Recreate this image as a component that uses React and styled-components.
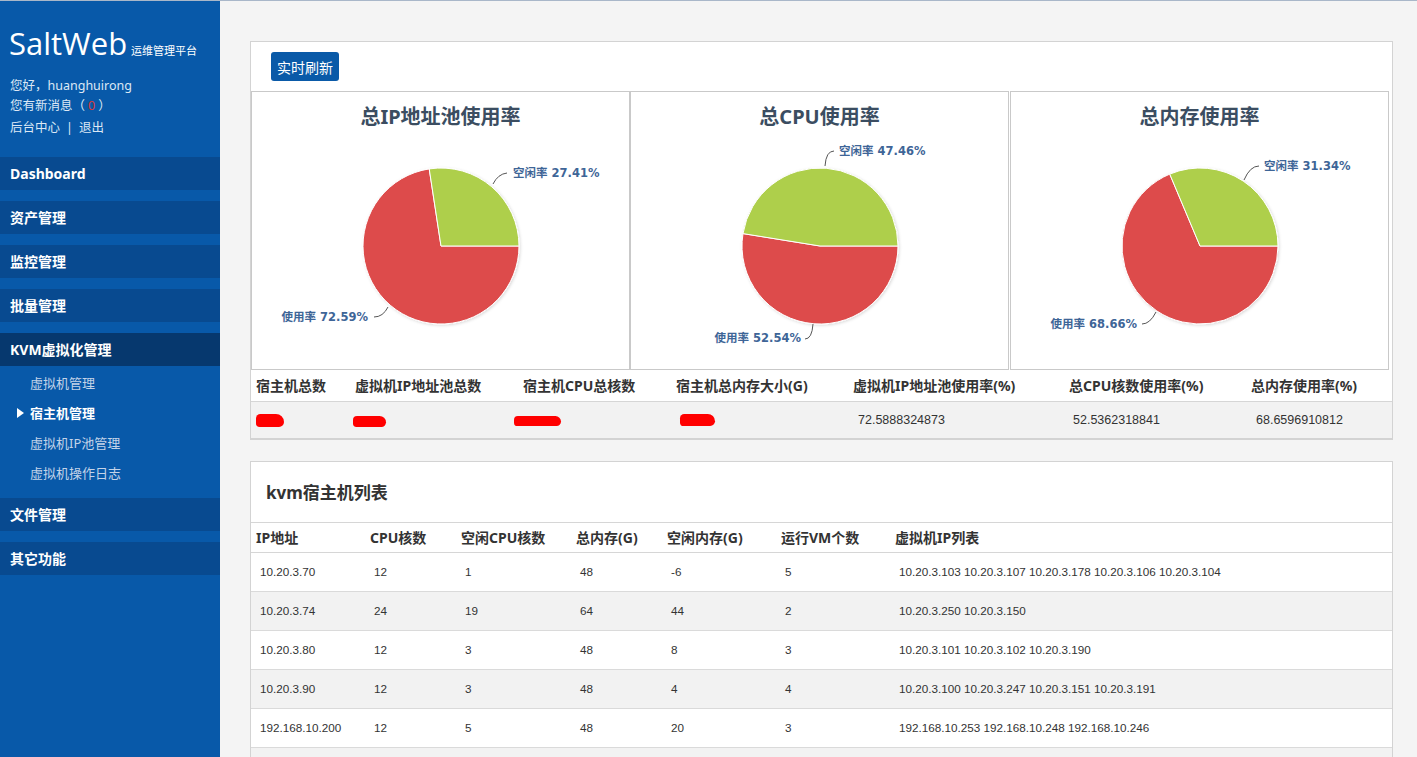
import React from 'react';
import styled, { createGlobalStyle } from 'styled-components';

const GlobalStyle = createGlobalStyle`
  html, body {
    margin: 0;
    padding: 0;
    background: #f4f4f4;
    font-family: "Noto Sans", "Noto Sans CJK SC", sans-serif;
    color: #333;
  }
`;

const Layout = styled.div`
  display: flex;
  min-height: 757px;
  border-top: 1px solid #a9b7c9;
  box-sizing: border-box;
`;

const Sidebar = styled.aside`
  width: 220px;
  flex-shrink: 0;
  background: #0859a9;
  color: #fff;
`;

const Brand = styled.div`
  display: flex;
  align-items: baseline;
  padding: 25px 0 0 9px;
  height: 44px;
`;

const Logo = styled.span`
  font-family: "Open Sans", "Noto Sans", sans-serif;
  font-size: 31px;
  line-height: 34px;
`;

const Slogan = styled.span`
  font-family: "Noto Sans CJK SC", sans-serif;
  font-size: 11px;
  margin-left: 4px;
`;

const UserInfo = styled.div`
  padding: 6px 0 0 10px;
  font-size: 12.5px;
  line-height: 19.5px;
  color: #dce8f5;
`;

const InfoLine = styled.div`
  margin-top: ${p => p.$gap || 0}px;
`;

const Badge = styled.span`
  color: #d9393b;
  margin: 0 3px;
`;

const Divider = styled.span`
  margin: 0 6px;
`;

const Nav = styled.nav`
  margin-top: 19px;
  display: flex;
  flex-direction: column;
  gap: 11px;
`;

const NavBar = styled.div`
  height: 33px;
  display: flex;
  align-items: center;
  padding-left: 10px;
  background: ${p => (p.$active ? '#06386e' : '#084a90')};
  font-weight: 700;
  font-size: 14px;
  color: #fff;
`;

const SubList = styled.div`
  padding: 2px 0 0;
  margin-bottom: -1px;
`;

const SubItem = styled.div`
  position: relative;
  height: 30px;
  display: flex;
  align-items: center;
  padding-left: 30px;
  font-size: 13px;
  font-weight: ${p => (p.$active ? 700 : 400)};
  color: ${p => (p.$active ? '#fff' : '#c3d3e8')};
`;

const Caret = styled.span`
  position: absolute;
  left: 17px;
  top: 10px;
  width: 0;
  height: 0;
  border-left: 7px solid #fff;
  border-top: 5px solid transparent;
  border-bottom: 5px solid transparent;
`;

const Main = styled.main`
  flex: 1;
  padding: 40px 24px 0 30px;
  display: flex;
  flex-direction: column;
  gap: 21px;
  overflow: hidden;
`;

const Card = styled.section`
  background: #fff;
  border: 1px solid #d3d3d3;
  border-bottom-width: ${p => p.$bottom || 1}px;
`;

const Toolbar = styled.div`
  padding: 10px 20px;
`;

const Button = styled.button`
  height: 29px;
  padding: 0 6px;
  border: none;
  border-radius: 3px;
  background: #0a5aa8;
  color: #fff;
  font-family: "Noto Sans CJK SC", sans-serif;
  font-size: 14px;
`;

const ChartRow = styled.div`
  display: flex;
`;

const ChartBox = styled.div`
  width: 379px;
  height: 279px;
  box-sizing: border-box;
  border: 1px solid #c9c9c9;
  margin-right: ${p => p.$gap || 0}px;
  display: flex;
  flex-direction: column;
`;

const ChartTitle = styled.h3`
  margin: 12px 0 0;
  height: 26px;
  line-height: 26px;
  text-align: center;
  font-size: 20px;
  font-weight: 700;
  color: #3b4d61;
`;

const Table = styled.table`
  width: 100%;
  border-collapse: collapse;
  table-layout: fixed;
`;

const Th = styled.th`
  box-sizing: border-box;
  width: ${p => (p.$w ? `${p.$w}px` : 'auto')};
  height: ${p => p.$h || 31}px;
  padding: 0 0 0 5px;
  text-align: left;
  font-size: 14px;
  font-weight: 700;
  color: #333;
  border-top: ${p => (p.$top ? '1px solid #d6d6d6' : 'none')};
  border-bottom: 1px solid #d6d6d6;
  white-space: nowrap;
`;

const Tr = styled.tr`
  background: ${p => (p.$striped ? '#f2f2f2' : '#fff')};
`;

const Td = styled.td`
  height: ${p => p.$h || 38}px;
  padding: 0 0 0 ${p => p.$pad || 9}px;
  font-family: "Liberation Sans", "Noto Sans CJK SC", sans-serif;
  font-size: ${p => p.$size || 11.7}px;
  color: #333;
  border-bottom: ${p => (p.$line ? '1px solid #dadada' : 'none')};
  white-space: nowrap;
`;

const Redact = styled.span`
  display: inline-block;
  vertical-align: middle;
  width: ${p => p.$w}px;
  height: ${p => p.$h || 11}px;
  margin-left: ${p => p.$x || 0}px;
  margin-top: ${p => p.$y || 0}px;
  background: #f00;
  border-radius: 7px ${p => p.$h || 11}px 8px 6px;
`;

const ListTitle = styled.h2`
  margin: 0;
  height: 60px;
  display: flex;
  align-items: center;
  padding-left: 15px;
  font-size: 17px;
  font-weight: 700;
  color: #333;
`;

const CX = 189;
const CY = 116;
const R = 78;

const pt = (deg, r) => {
  const a = (deg * Math.PI) / 180;
  return [CX + r * Math.sin(a), CY - r * Math.cos(a)];
};

const slicePath = (from, to) => {
  const [x1, y1] = pt(from, R);
  const [x2, y2] = pt(to, R);
  const large = to - from > 180 ? 1 : 0;
  return `M${CX} ${CY} L${x1} ${y1} A${R} ${R} 0 ${large} 1 ${x2} ${y2} Z`;
};

const charts = [
  {
    title: '总IP地址池使用率',
    used: 72.59,
    free: 27.41,
    freeLabel: { x: 72, y: -73, line: [[52, -62], [57, -72], [66, -73]] },
    usedLabel: { x: -73, y: 71, line: [[-53, 61], [-58, 71], [-67, 71]] },
  },
  {
    title: '总CPU使用率',
    used: 52.54,
    free: 47.46,
    freeLabel: { x: 19, y: -95, line: [[5, -80], [6, -95], [14, -95]] },
    usedLabel: { x: -19, y: 92, line: [[-7, 78], [-8, 93], [-15, 93]] },
  },
  {
    title: '总内存使用率',
    used: 68.66,
    free: 31.34,
    freeLabel: { x: 64, y: -80, line: [[44, -66], [50, -80], [59, -80]] },
    usedLabel: { x: -63, y: 78, line: [[-44, 66], [-50, 78], [-58, 78]] },
  },
];

const Connector = ({ line }) => {
  const [[a, b], [c, d], [e, f]] = line;
  return (
    <path
      d={`M${CX + a} ${CY + b} Q${CX + c} ${CY + d} ${CX + e} ${CY + f}`}
      fill="none"
      stroke="#555"
      strokeWidth="1"
    />
  );
};

const PieLabel = ({ label, text, anchor }) => (
  <text
    x={CX + label.x}
    y={CY + label.y + 4}
    textAnchor={anchor}
    fontFamily='"DejaVu Sans", "Noto Sans CJK SC", sans-serif'
    fontSize="11.5"
    fontWeight="700"
    fill="#3e6597"
  >
    {text}
  </text>
);

const Pie = ({ chart }) => {
  const split = 90 + chart.used * 3.6;
  return (
    <svg width="377" height="239" viewBox="0 0 377 239">
      <defs>
        <filter id="pieShadow" x="-20%" y="-20%" width="140%" height="140%">
          <feDropShadow dx="1" dy="1" stdDeviation="1.5" floodColor="#000" floodOpacity="0.15" />
        </filter>
      </defs>
      <g filter="url(#pieShadow)">
        <path d={slicePath(90, split)} fill="#dd4b4b" stroke="#fff" strokeWidth="1" />
        <path d={slicePath(split, 450)} fill="#aecf4c" stroke="#fff" strokeWidth="1" />
      </g>
      <Connector line={chart.freeLabel.line} />
      <Connector line={chart.usedLabel.line} />
      <PieLabel label={chart.freeLabel} text={`空闲率 ${chart.free}%`} anchor="start" />
      <PieLabel label={chart.usedLabel} text={`使用率 ${chart.used}%`} anchor="end" />
    </svg>
  );
};

const summaryCols = [
  ['宿主机总数', 99],
  ['虚拟机IP地址池总数', 168],
  ['宿主机CPU总核数', 153],
  ['宿主机总内存大小(G)', 177],
  ['虚拟机IP地址池使用率(%)', 216],
  ['总CPU核数使用率(%)', 182],
  ['总内存使用率(%)', null],
];

const hostCols = [
  ['IP地址', 114],
  ['CPU核数', 91],
  ['空闲CPU核数', 115],
  ['总内存(G)', 91],
  ['空闲内存(G)', 114],
  ['运行VM个数', 114],
  ['虚拟机IP列表', null],
];

const hosts = [
  ['10.20.3.70', 12, 1, 48, -6, 5, '10.20.3.103 10.20.3.107 10.20.3.178 10.20.3.106 10.20.3.104'],
  ['10.20.3.74', 24, 19, 64, 44, 2, '10.20.3.250 10.20.3.150'],
  ['10.20.3.80', 12, 3, 48, 8, 3, '10.20.3.101 10.20.3.102 10.20.3.190'],
  ['10.20.3.90', 12, 3, 48, 4, 4, '10.20.3.100 10.20.3.247 10.20.3.151 10.20.3.191'],
  ['192.168.10.200', 12, 5, 48, 20, 3, '192.168.10.253 192.168.10.248 192.168.10.246'],
  ['', '', '', '', '', '', ''],
];

const kvmSubs = ['虚拟机管理', '宿主机管理', '虚拟机IP池管理', '虚拟机操作日志'];

const App = () => (
  <>
    <GlobalStyle />
    <Layout>
      <Sidebar>
        <Brand>
          <Logo>SaltWeb</Logo>
          <Slogan>运维管理平台</Slogan>
        </Brand>
        <UserInfo>
          <InfoLine>您好，huanghuirong</InfoLine>
          <InfoLine>
            您有新消息（<Badge>0</Badge>）
          </InfoLine>
          <InfoLine $gap={3}>
            后台中心<Divider>|</Divider>退出
          </InfoLine>
        </UserInfo>
        <Nav>
          <NavBar>Dashboard</NavBar>
          <NavBar>资产管理</NavBar>
          <NavBar>监控管理</NavBar>
          <NavBar>批量管理</NavBar>
          <div>
            <NavBar $active>KVM虚拟化管理</NavBar>
            <SubList>
              {kvmSubs.map((s, i) => (
                <SubItem key={s} $active={i === 1}>
                  {i === 1 && <Caret />}
                  {s}
                </SubItem>
              ))}
            </SubList>
          </div>
          <NavBar>文件管理</NavBar>
          <NavBar>其它功能</NavBar>
        </Nav>
      </Sidebar>

      <Main>
        <Card $bottom={2}>
          <Toolbar>
            <Button>实时刷新</Button>
          </Toolbar>
          <ChartRow>
            {charts.map((c, i) => (
              <ChartBox key={c.title} $gap={i === 1 ? 1 : 0}>
                <ChartTitle>{c.title}</ChartTitle>
                <Pie chart={c} />
              </ChartBox>
            ))}
          </ChartRow>
          <Table>
            <thead>
              <tr>
                {summaryCols.map(([t, w]) => (
                  <Th key={t} $w={w}>{t}</Th>
                ))}
              </tr>
            </thead>
            <tbody>
              <Tr $striped>
                <Td $h={36} $pad={5}><Redact $w={28} $h={13} /></Td>
                <Td $h={36} $pad={3}><Redact $w={33} $h={11} $y={4} /></Td>
                <Td $h={36} $pad={0}><Redact $w={47} $h={10} $x={-13} $y={2} /></Td>
                <Td $h={36} $pad={9}><Redact $w={35} $h={12} /></Td>
                <Td $h={36} $pad={10} $size={12.5}>72.5888324873</Td>
                <Td $h={36} $pad={9} $size={12.5}>52.5362318841</Td>
                <Td $h={36} $pad={10} $size={12.5}>68.6596910812</Td>
              </Tr>
            </tbody>
          </Table>
        </Card>

        <Card>
          <ListTitle>kvm宿主机列表</ListTitle>
          <Table>
            <thead>
              <tr>
                {hostCols.map(([t, w]) => (
                  <Th key={t} $w={w} $h={30} $top>{t}</Th>
                ))}
              </tr>
            </thead>
            <tbody>
              {hosts.map((row, i) => (
                <Tr key={i} $striped={i % 2 === 1}>
                  {row.map((v, j) => (
                    <Td key={j} $line>{v}</Td>
                  ))}
                </Tr>
              ))}
            </tbody>
          </Table>
        </Card>
      </Main>
    </Layout>
  </>
);

export default App;
